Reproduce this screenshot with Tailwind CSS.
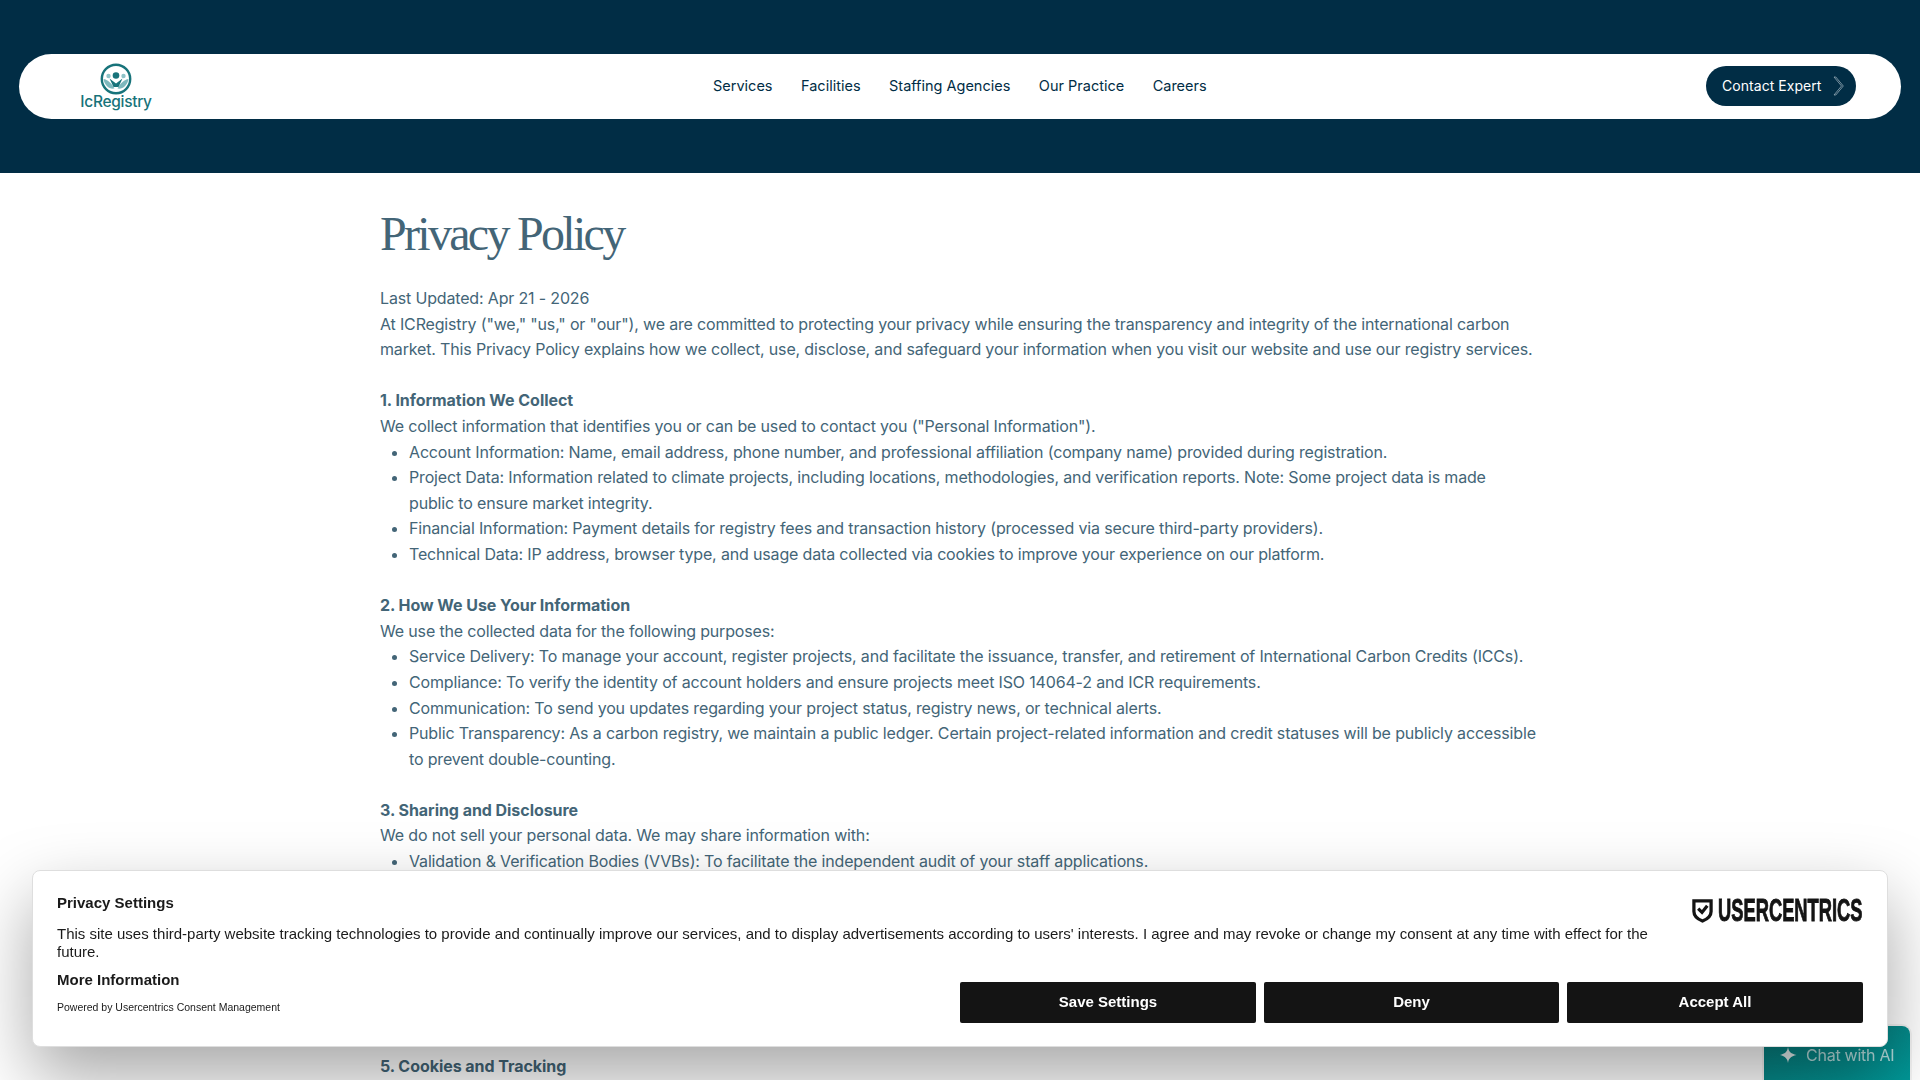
<!DOCTYPE html>
<html lang="en">
<head>
<meta charset="utf-8">
<title>Privacy Policy</title>
<script src="https://cdn.jsdelivr.net/npm/@tailwindcss/browser@4"></script>
</head>
<body class="h-[1080px] overflow-hidden bg-white font-['Inter',sans-serif]">
<header class="bg-[#012d45] h-[172.5px] pt-[54px] px-[19px]">
  <nav class="h-[65px] bg-white rounded-full flex items-center pl-[62px] pr-[45px] relative">
    <a class="flex flex-col items-center w-[70px] shrink-0 -mt-[3px]">
      <svg class="w-[32px] h-[32px] mt-[1px]" viewBox="0 0 32 32">
        <circle cx="16" cy="16" r="14.2" fill="none" stroke="#17737a" stroke-width="2.4"/>
        <circle cx="16" cy="12.500" r="3.300" fill="#17737a"/>
        <circle cx="8.500" cy="13" r="2.200" fill="#8fc3c8"/>
        <circle cx="23.500" cy="13" r="2.200" fill="#8fc3c8"/>
        <path d="M3.500 16c4 .5 8 4 11 9.500-5 1-10-3-11-9.500zM28.500 16c-4 .5-8 4-11 9.500 5 1 10-3 11-9.500z" fill="#7db8bd"/>
        <path d="M9.500 15.500l6.500 5 6.500-5-4 8.500h-5z" fill="#17737a"/>
      </svg>
      <span class="text-[15.5px] leading-[13px] text-[#17737a] font-medium tracking-[-0.3px] whitespace-nowrap">IcRegistry</span>
    </a>
    <ul class="flex items-center gap-[28.500px] ml-[562px] -mt-[2px] text-[14.5px] text-[#012d45]">
      <li>Services</li>
      <li>Facilities</li>
      <li>Staffing Agencies</li>
      <li>Our Practice</li>
      <li>Careers</li>
    </ul>
    <a class="ml-auto -mt-[1px] h-[40px] w-[150px] rounded-full bg-[#012d45] flex items-center pl-[16px] text-white text-[14px] tracking-[0.05px] gap-[12px]">
      <span class="-mt-[1px]">Contact Expert</span>
      <svg class="w-[12px] h-[20px]" viewBox="0 0 12 20" fill="none" stroke="#a9bac4" stroke-width="0.7"><path d="M1 1l7.500 9-7.500 9h1.800l7.500-9-7.500-9z"/></svg>
    </a>
  </nav>
</header>
<main class="pl-[380px] pr-[380px] pt-[31.500px] text-[#436577] text-[16px] leading-[25.6px] tracking-[-0.16px]">
  <h1 class="font-['Liberation_Serif',serif] text-[48px] leading-[60px] mb-[22px] tracking-[-2.7px]">Privacy Policy</h1>
  <div>
    <p>Last Updated: Apr 21 - 2026</p>
    <p>At ICRegistry ("we," "us," or "our"), we are committed to protecting your privacy while ensuring the transparency and integrity of the international carbon market. This Privacy Policy explains how we collect, use, disclose, and safeguard your information when you visit our website and use our registry services.</p>
    <br>
    <p class="font-bold tracking-[-0.05px]">1. Information We Collect</p>
    <p>We collect information that identifies you or can be used to contact you ("Personal Information").</p>
    <ul class="list-disc pl-[29px]">
      <li>Account Information: Name, email address, phone number, and professional affiliation (company name) provided during registration.</li>
      <li class="pr-[30px]">Project Data: Information related to climate projects, including locations, methodologies, and verification reports. Note: Some project data is made public to ensure market integrity.</li>
      <li>Financial Information: Payment details for registry fees and transaction history (processed via secure third-party providers).</li>
      <li>Technical Data: IP address, browser type, and usage data collected via cookies to improve your experience on our platform.</li>
    </ul>
    <br>
    <p class="font-bold tracking-[-0.05px]">2. How We Use Your Information</p>
    <p>We use the collected data for the following purposes:</p>
    <ul class="list-disc pl-[29px]">
      <li>Service Delivery: To manage your account, register projects, and facilitate the issuance, transfer, and retirement of International Carbon Credits (ICCs).</li>
      <li>Compliance: To verify the identity of account holders and ensure projects meet ISO 14064-2 and ICR requirements.</li>
      <li>Communication: To send you updates regarding your project status, registry news, or technical alerts.</li>
      <li>Public Transparency: As a carbon registry, we maintain a public ledger. Certain project-related information and credit statuses will be publicly accessible to prevent double-counting.</li>
    </ul>
    <br>
    <p class="font-bold tracking-[-0.05px]">3. Sharing and Disclosure</p>
    <p>We do not sell your personal data. We may share information with:</p>
    <ul class="list-disc pl-[29px]">
      <li>Validation &amp; Verification Bodies (VVBs): To facilitate the independent audit of your staff applications.</li>
      <li>Service Providers: To operate our platform and registry services.</li>
      <li>Legal Authorities: When required by applicable law.</li>
    </ul>
    <br>
    <p class="font-bold tracking-[-0.05px]">4. Data Security</p>
    <p>We use appropriate safeguards to protect your information.</p>
    <br>
    <br>
    <p class="font-bold tracking-[-0.05px]">5. Cookies and Tracking</p>
  </div>
</main>

<aside class="fixed right-[10px] top-[1026px] w-[146px] h-[60px] rounded-t-[8px] bg-gradient-to-br from-[#087a7a] to-[#009a9a] ring-2 ring-black/5 flex items-start pl-[16px] pt-[17px] gap-[8px] text-[16px] tracking-[-0.25px] text-white/70">
  <svg class="w-[18px] h-[18px] mt-[3px] shrink-0" viewBox="0 0 18 18" fill="#e5eeee"><path d="M8 1c.6 4.500 2.500 6.500 8.500 8-6 1.500-7.900 3.500-8.500 8-.6-4.500-2.500-6.500-8-8 5.500-1.500 7.400-3.500 8-8z"/></svg>
  <span>Chat with AI</span>
</aside>

<section class="fixed left-[32px] right-[32px] top-[869.500px] h-[177.500px] bg-white rounded-[8px] border border-[#dedede] shadow-[0_30px_70px_rgba(0,0,0,0.35)] font-['Liberation_Sans',sans-serif] text-[#1a1a1a] flex flex-col pl-[24px] pr-[24px] pt-[22px]">
  <div class="flex justify-between items-start">
    <div class="w-[1620px]">
      <h2 class="text-[15px] leading-[20px] font-bold">Privacy Settings</h2>
      <p class="mt-[12.500px] text-[15px] leading-[18px]">This site uses third-party website tracking technologies to provide and continually improve our services, and to display advertisements according to users' interests. I agree and may revoke or change my consent at any time with effect for the future.</p>
    </div>
    <div class="flex items-center gap-[5px] mt-[6.500px] text-[#141414] w-[171px] shrink-0">
      <svg class="w-[21px] h-[24px] shrink-0" viewBox="0 0 22 25" fill="none"><path d="M2 2h18v11c0 5-4 8-9 10C6 21 2 18 2 13z" stroke="#141414" stroke-width="3.400"/><path d="M6.500 10l4 4L16 7" stroke="#141414" stroke-width="3.400"/></svg>
      <span class="font-['Liberation_Sans',sans-serif] font-bold text-[30.700px] leading-[24px] whitespace-nowrap origin-left scale-x-[0.597] [-webkit-text-stroke:0.9px_#141414]">USERCENTRICS</span>
    </div>
  </div>
  <div class="flex justify-between items-start">
    <div>
      <h3 class="mt-[10px] text-[15px] leading-[18px] font-bold">More Information</h3>
      <p class="mt-[11px] text-[10.500px] leading-[14px]">Powered by Usercentrics Consent Management</p>
    </div>
    <div class="flex gap-[8px] mt-[21px] text-white font-bold text-[15px]">
      <button class="w-[296px] h-[41px] bg-[#141414] rounded-[2px]">Save Settings</button>
      <button class="w-[295px] h-[41px] bg-[#141414] rounded-[2px]">Deny</button>
      <button class="w-[296px] h-[41px] bg-[#141414] rounded-[2px]">Accept All</button>
    </div>
  </div>
</section>
</body>
</html>
